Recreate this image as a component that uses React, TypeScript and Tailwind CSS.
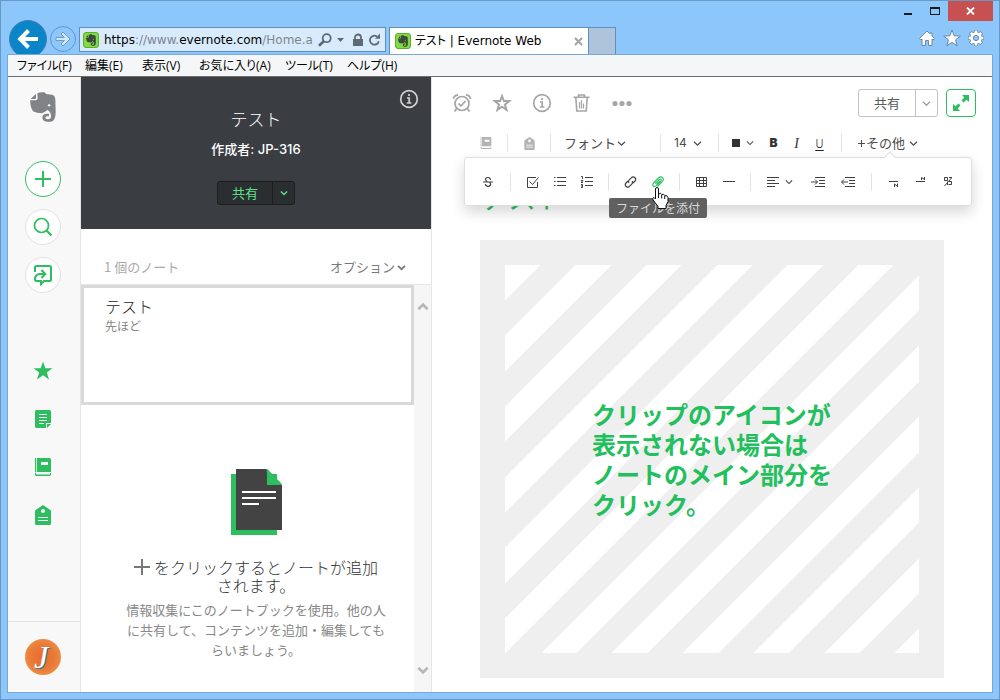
import React from "react";

type Kids = { children?: React.ReactNode };

function Chevron({ className = "", size = 9, width = 1.4 }: { className?: string; size?: number; width?: number }) {
  return (
    <svg className={className} width={size} height={size} viewBox="0 0 9 9" fill="none" stroke="currentColor" strokeWidth={width} aria-hidden="true">
      <path d="M1 2.8 4.5 6.2 8 2.8" />
    </svg>
  );
}

function Elephant({ width, height }: { width: number; height: number }) {
  return (
    <svg width={width} height={height} viewBox="0 0 78 90" fill="currentColor" aria-hidden="true">
      <path
        fillRule="evenodd"
        d="M22 4Q30-1 44 1L48 6 66 8Q75 10 76 22L77 60Q77 88 62 89H50Q37 88 37 76Q38 65 50 65H57V73H51Q46 74 46 78Q47 82 54 82Q64 82 63 70Q61 58 52 54Q46 60 36 64Q20 64 9 58Q-1 42 1 25H18Q23 24 23 19ZM53 43H62Q61 36 57 36 53 37 53 43Z"
      />
      <path d="M18 5 2 21H15Q18 21 18 18Z" />
    </svg>
  );
}

function EvernoteBadge() {
  return (
    <span className="flex size-4 shrink-0 items-center justify-center rounded-[3px] border border-[#5fae2c] bg-[#7ddb45] text-[#3d4a38]">
      <Elephant width={10} height={12} />
    </span>
  );
}

function WindowHeader() {
  return (
    <header className="flex h-[53px] items-start overflow-hidden">
      <button aria-label="戻る" className="mt-[19px] ml-0.5 flex size-[38px] shrink-0 items-center justify-center rounded-full border border-[#4a7ba8] bg-[#0a86c8] text-white">
        <svg width="22" height="22" viewBox="0 0 22 22" fill="none" stroke="currentColor" strokeWidth="4">
          <path d="M3 11H21M11.5 2.5 3.2 11 11.5 19.5" />
        </svg>
      </button>
      <button aria-label="進む" className="mt-[25px] ml-[3px] flex size-[26px] shrink-0 items-center justify-center rounded-full border border-[#5f97c9]">
        <svg width="16" height="16" viewBox="0 0 16 16">
          <path d="M1 6.5H9.500L6 3 8 1 15 8 8 15 6 13 9.500 9.500H1Z" fill="#d3e9fd" stroke="#6a9dca" strokeWidth="1" />
        </svg>
      </button>
      <div className="mt-[26px] ml-[3px] flex h-[25px] w-[307px] shrink-0 items-center border border-[#5f8fbd] bg-[#d8ebfc] pl-[3px]">
        <EvernoteBadge />
        <div role="textbox" aria-label="アドレス" className="ml-[5px] w-[210px] overflow-hidden font-['DejaVu_Sans',sans-serif] text-[12px] leading-5 whitespace-nowrap text-[#7d8790]">
          <span className="text-black">https</span>://www.<span className="text-black">evernote.com</span>/Home.a
        </div>
        <div className="ml-1 flex items-center text-[#5e6b76]">
          <button aria-label="検索" className="w-[15px]">
            <svg width="14" height="14" viewBox="0 0 14 14" fill="none" stroke="currentColor" strokeWidth="1.8">
              <circle cx="8.700" cy="5.200" r="4" />
              <path d="M6 8 1 12.800" strokeWidth="2.600" />
            </svg>
          </button>
          <button aria-label="履歴" className="ml-1 w-[11px]">
            <svg width="7" height="4" viewBox="0 0 7 4"><path d="M0 0H7L3.500 4Z" fill="currentColor" /></svg>
          </button>
          <svg className="ml-1" width="12" height="14" viewBox="0 0 12 14" aria-hidden="true">
            <path d="M1 6H11V13H1Z" fill="currentColor" />
            <path d="M3 6V4.500a3 3 0 0 1 6 0V6" fill="none" stroke="currentColor" strokeWidth="1.800" />
          </svg>
          <button aria-label="更新" className="ml-1">
            <svg width="13" height="14" viewBox="0 0 13 14" fill="none" stroke="currentColor" strokeWidth="1.800">
              <path d="M10.800 8.200A4.500 4.500 0 1 1 9 3.500" />
              <path d="M7 5.700H12V.5Z" fill="currentColor" stroke="none" />
            </svg>
          </button>
        </div>
      </div>
      <div className="mt-[26px] ml-[3px] flex h-[27px] w-[200px] shrink-0 items-center border border-b-0 border-[#5f8fbd] bg-white pl-[5px]">
        <EvernoteBadge />
        <span className="ml-1 flex-1 font-['DejaVu_Sans','Noto_Sans_CJK_JP',sans-serif] text-[12px] leading-5 whitespace-nowrap text-black [font-feature-settings:'palt']">
          テスト | Evernote Web
        </span>
        <button aria-label="タブを閉じる" className="mr-[5px]">
          <svg width="9" height="9" viewBox="0 0 9 9" stroke="#a3a3a3" strokeWidth="2"><path d="M1 1 8 8M8 1 1 8" /></svg>
        </button>
      </div>
      <button aria-label="新しいタブ" className="mt-[26px] h-[27px] w-[27px] shrink-0 border border-b-0 border-l-0 border-[#5f8fbd] bg-[#adc4da]" />
      <div className="ml-auto flex flex-col items-end">
        <div className="flex">
          <button aria-label="最小化" className="flex h-5 w-[27px] items-center justify-center">
            <svg width="8" height="8" viewBox="0 0 8 8"><path d="M0 6H8V8H0Z" fill="#1c1c1c" /></svg>
          </button>
          <button aria-label="最大化" className="flex h-5 w-[27px] items-center justify-center">
            <svg width="10" height="8" viewBox="0 0 10 8"><path d="M0 0H10V8H0ZM1 2V7H9V2Z" fill="#1c1c1c" fillRule="evenodd" /></svg>
          </button>
          <button aria-label="閉じる" className="flex h-5 w-[45px] items-center justify-center bg-[#c75050]">
            <svg width="9" height="8" viewBox="0 0 9 8" stroke="#fff" strokeWidth="1.800"><path d="M1 .5 8 7.500M8 .5 1 7.500" /></svg>
          </button>
        </div>
        <div className="mt-2 mr-2 flex gap-1.5">
          <button aria-label="ホーム">
            <svg width="18" height="18" viewBox="0 0 18 18" fill="#fff" stroke="#6b89a5" strokeWidth="1">
              <path d="M8 2 .5 9.500 2 11 3 10V16.500H6.500V11.500H9.500V16.500H13V10L14 11 15.500 9.500 13 7V4H11V5Z" />
            </svg>
          </button>
          <button aria-label="お気に入り">
            <svg width="18" height="18" viewBox="0 0 18 18" fill="#fff" stroke="#6b89a5" strokeWidth="1">
              <path d="M9 1 11.200 6.800 17.300 7.100 12.500 10.900 14.200 16.800 9 13.400 3.800 16.800 5.500 10.900 .7 7.100 6.800 6.800Z" />
            </svg>
          </button>
          <button aria-label="設定">
            <svg width="18" height="18" viewBox="0 0 18 18" aria-hidden="true">
              <g stroke="#6b89a5" strokeWidth="4"><path d="M9 1V17M1 9H17M3.300 3.300 14.700 14.700M14.700 3.300 3.300 14.700" /></g>
              <circle cx="9" cy="9" r="6.400" fill="#6b89a5" />
              <g stroke="#fff" strokeWidth="2.600"><path d="M9 1.600V16.400M1.600 9H16.400M3.800 3.800 14.200 14.200M14.200 3.800 3.800 14.200" /></g>
              <circle cx="9" cy="9" r="5.700" fill="#fff" />
              <circle cx="9" cy="9" r="2.600" fill="#8dc6fb" stroke="#6b89a5" strokeWidth="1" />
            </svg>
          </button>
        </div>
      </div>
    </header>
  );
}

function MenuBar() {
  return (
    <nav className="flex h-[22px] items-center border-b border-[#6d6d6d] bg-[#f5f6f7] pl-[9px] font-['Open_Sans','Noto_Sans_CJK_JP',sans-serif] text-[12px] leading-5 whitespace-nowrap text-black [font-feature-settings:'palt']">
      <button className="w-[68px] text-left">ファイル(F)</button>
      <button className="w-[57px] text-left">編集(E)</button>
      <button className="w-[57px] text-left">表示(V)</button>
      <button className="w-[86px] text-left">お気に入り(A)</button>
      <button className="w-[62px] text-left">ツール(T)</button>
      <button className="text-left">ヘルプ(H)</button>
    </nav>
  );
}

function NotebookGlyph({ size }: { size: number }) {
  return (
    <svg width={size} height={size} viewBox="0 0 18 18" fill="currentColor" aria-hidden="true">
      <path d="M1 0H2.200V14H1Z" />
      <path fillRule="evenodd" d="M3 0H15.500A1.500 1.500 0 0 1 17 1.500V14H3ZM7 4V7H14V4Z" />
      <path d="M1 14.200 2 15V15.500A1 1 0 0 0 3 16.500H16V15H17V16.500A1.500 1.500 0 0 1 15.500 18H2.500A1.500 1.500 0 0 1 1 16.500Z" />
    </svg>
  );
}

function TagGlyph({ size }: { size: number }) {
  return (
    <svg width={size} height={size} viewBox="0 0 20 20" fill="currentColor" aria-hidden="true">
      <path fillRule="evenodd" d="M10 0 17 4.700Q18 5.400 18 6.500V18.500A1.500 1.500 0 0 1 16.500 20H3.500A1.500 1.500 0 0 1 2 18.500V6.500Q2 5.400 3 4.700ZM10 4A2 2 0 1 0 10 8A2 2 0 1 0 10 4ZM5 12V13H15V12ZM5 15V16H15V15Z" />
    </svg>
  );
}

function SideItem({ label, round, border = "", children }: Kids & { label: string; round?: boolean; border?: string }) {
  return (
    <button aria-label={label} className={`flex size-9 items-center justify-center text-[#2dbe60] ${round ? "rounded-full border bg-white" : ""} ${border}`}>
      {children}
    </button>
  );
}

function Sidebar() {
  return (
    <aside className="flex w-[73px] shrink-0 flex-col border-r border-[#e6e6e6] bg-[#f8f8f8]">
      <div className="flex flex-1 flex-col items-center gap-3 pt-[15px] pr-0.5">
        <a href="#home" aria-label="Evernote" className="mb-[26px] text-[#828387]">
          <span className="flex h-[31px] items-start"><Elephant width={26} height={30} /></span>
        </a>
        <SideItem label="新規ノート" round border="border-[#2dbe60]">
          <svg width="16" height="16" viewBox="0 0 16 16" stroke="currentColor" strokeWidth="2"><path d="M8 0V16M0 8H16" /></svg>
        </SideItem>
        <SideItem label="検索" round border="border-[#e2e2e2]">
          <svg width="20" height="20" viewBox="0 0 20 20" fill="none" stroke="currentColor" strokeWidth="1.700">
            <circle cx="8.500" cy="8.500" r="7" /><path d="M13.500 13.500 18.500 18.500" strokeWidth="2.200" />
          </svg>
        </SideItem>
        <SideItem label="ワークチャット" round border="border-[#e2e2e2]">
          <svg width="20" height="22" viewBox="0 0 20 22" fill="none" stroke="currentColor" strokeWidth="2">
            <path d="M2 8V3.500A1.500 1.500 0 0 1 3.500 2H16.500A1.500 1.500 0 0 1 18 3.500V15.500A1.500 1.500 0 0 1 16.500 17H11L8 20V17H3.500A1.500 1.500 0 0 1 2 15.500C2 11.500 4 10 7 10H12M8.500 6 12.300 10 8.500 14" />
          </svg>
        </SideItem>
        <div className="mt-12 flex flex-col gap-3">
          <SideItem label="ショートカット">
            <svg width="20" height="20" viewBox="0 0 20 20"><path d="M10 .5 12.300 7.300H19.500L13.800 11.500 16 18.500 10 14.300 4 18.500 6.200 11.500 .5 7.300H7.700Z" fill="currentColor" /></svg>
          </SideItem>
          <SideItem label="ノート">
            <svg width="16" height="18" viewBox="0 0 16 18" fill="currentColor">
              <path fillRule="evenodd" d="M1.500 0H14.500A1.500 1.500 0 0 1 16 1.500V13H11V18H1.500A1.500 1.500 0 0 1 0 16.500V1.500A1.500 1.500 0 0 1 1.500 0ZM4 4V5H12V4ZM4 7V8H12V7ZM4 10V11H12V10ZM4 13V14H9V13Z" />
              <path d="M12 14H16L12 18Z" />
            </svg>
          </SideItem>
          <SideItem label="ノートブック"><NotebookGlyph size={18} /></SideItem>
          <SideItem label="タグ"><TagGlyph size={20} /></SideItem>
        </div>
      </div>
      <div className="flex h-[71px] items-center justify-center border-t border-[#e2e2e2] pr-0.5">
        <button
          aria-label="アカウント"
          className="flex size-9 items-center justify-center rounded-full bg-[radial-gradient(circle,#e8692f_0%,#ea7b38_50%,#efa351_100%)] pr-1 font-['Liberation_Serif',serif] text-[32px] leading-9 text-white italic [text-shadow:1px_1px_0_#2a7fa8]"
        >
          J
        </button>
      </div>
    </aside>
  );
}

function InfoCircle({ size }: { size: number }) {
  return (
    <svg width={size} height={size} viewBox="0 0 20 20" fill="none" stroke="currentColor" aria-hidden="true">
      <circle cx="10" cy="10" r="8.300" strokeWidth="1.700" />
      <path d="M10 5V7M8 9H10.200V13.700M7.800 14H12.400" strokeWidth="1.700" />
    </svg>
  );
}

function NoteList() {
  return (
    <section className="flex w-[351px] shrink-0 flex-col border-r border-[#e6e6e6] bg-white">
      <div className="relative flex h-[152px] flex-col items-center bg-[#3a3d42] pt-[30px]">
        <button aria-label="ノートブック情報" className="absolute top-3 right-3 text-[#d0d1d2]"><InfoCircle size={20} /></button>
        <h1 className="text-[17px] leading-6 font-light text-white">テスト</h1>
        <p className="mt-2 font-['Inter','Noto_Sans_CJK_JP',sans-serif] text-[13px] leading-5 font-medium text-white">作成者: JP-316</p>
        <div className="mt-[22px] flex h-6 overflow-hidden rounded-[3px] border border-[#1b1d1f] bg-[#2b2e31] text-[#5fe08a]">
          <button className="w-[54px] text-[13px] leading-5">共有</button>
          <button aria-label="共有メニュー" className="flex w-[22px] items-center justify-center border-l border-[#1b1d1f]"><Chevron size={8} width={1.6} /></button>
        </div>
      </div>
      <div className="flex h-14 items-end justify-between border-b border-[#e6e6e6] pr-[25px] pb-[7px] pl-[23px] text-[13px] leading-5">
        <span className="text-[#aaaaaa]">1 個のノート</span>
        <button className="flex items-center gap-0.5 text-[#7a7a7a]">オプション<Chevron width={1.800} /></button>
      </div>
      <div className="flex flex-1">
        <div className="flex flex-1 flex-col">
          <article className="h-[120px] border-3 border-[#d9d9d9] px-[21px] pt-1.5">
            <h2 className="text-[16px] leading-6 font-light text-[#222222]">テスト</h2>
            <p className="text-[12px] leading-4 text-[#888888]">先ほど</p>
          </article>
          <div className="flex flex-col items-center pt-16 pl-[17px]">
            <svg width="51" height="66" viewBox="0 0 51 66" aria-hidden="true">
              <path d="M0 5H46V66H0Z" fill="#2dbe60" />
              <path d="M5 0H36L51 16V61H5Z" fill="#434343" />
              <path d="M33 0Q36 0 38 2L49 13Q51 15 51 17V16H36V4Q36 0 33 0Z" fill="#2dbe60" />
              <path d="M11 22H45V24H11ZM11 28H45V30H11ZM11 34H28V36H11Z" fill="#fff" />
            </svg>
            <p className="mt-[23px] w-[260px] text-center text-[16px] leading-[18px] font-light text-[#333333]">
              <svg className="mr-1 inline-block align-[-1px]" width="16" height="16" viewBox="0 0 16 16" stroke="#777" strokeWidth="2" aria-label="+"><path d="M8 0V16M0 8H16" /></svg>
              をクリックするとノートが追加<br />されます。
            </p>
            <p className="mt-1.5 w-[260px] text-center text-[13px] leading-5 text-[#888888]">
              情報収集にこのノートブックを使用。他の人に共有して、コンテンツを追加・編集してもらいましょう。
            </p>
          </div>
        </div>
        <div className="flex w-[17px] flex-col items-center justify-between bg-[#f6f6f6] pt-4 pb-4 text-[#b8b8b8]">
          <button aria-label="上へスクロール" className="rotate-180"><Chevron size={12} width={2} /></button>
          <button aria-label="下へスクロール"><Chevron size={12} width={2} /></button>
        </div>
      </div>
    </section>
  );
}

function Divider({ className = "" }: { className?: string }) {
  return <span className={`h-[18px] w-px shrink-0 bg-[#e3e3e3] ${className}`} />;
}

function Tool({ label, className, children }: Kids & { label: string; className: string }) {
  return (
    <button aria-label={label} className={`flex h-6 shrink-0 items-center justify-center ${className}`}>
      {children}
    </button>
  );
}

function Lines({ d, w = 14, h = 12, className = "" }: { d: string; w?: number; h?: number; className?: string }) {
  return (
    <svg className={className} width={w} height={h} viewBox={`0 0 ${w} ${h}`} fill="none" stroke="currentColor" strokeWidth="1" aria-hidden="true">
      <path d={d} />
    </svg>
  );
}

function MoreTools() {
  return (
    <div className="absolute top-[80px] right-5 left-8 z-10 flex h-[49px] items-center rounded-[3px] border border-[#dedede] bg-white text-[#404040] shadow-[0_6px_14px_rgba(0,0,0,0.16)]">
      <span className="absolute -top-[5px] right-[77px] size-2 rotate-45 border-t border-l border-[#dedede] bg-white" />
      <Tool label="取り消し線" className="w-[45px]">
        <svg width="10" height="12" viewBox="0 0 10 12" fill="none" stroke="currentColor" strokeWidth="1.200" aria-hidden="true">
          <path d="M0 6H10M7.500 3.800Q7.300 1.500 5 1.500 2.500 1.500 2.500 3.300 2.500 4.800 4.200 5.300M6.500 6.500Q7.600 7.200 7.600 8.300 7.600 10.300 5 10.300 2.600 10.300 2.300 8" />
        </svg>
      </Tool>
      <Divider className="mr-2" />
      <Tool label="チェックボックス" className="w-[27px]"><Lines w={13} h={12} d="M11.500 6V11.500H1.500V1.500H10M3.500 5.500 6.500 8.500 12.500 1.500" /></Tool>
      <Tool label="箇条書き" className="w-[27px]"><Lines w={12} d="M3 1.500H12M3 5.500H12M3 9.500H12M0 1.500H1.500M0 5.500H1.500M0 9.500H1.500" /></Tool>
      <Tool label="番号付きリスト" className="w-[27px]"><Lines w={12} d="M4 1.500H12M4 5.500H12M4 9.500H12M0 .5H1.500V3M0 4.500H2L0 6.500H2M0 8.500H1.500V11.500H0M0 10H1.500" /></Tool>
      <Divider className="mx-2" />
      <Tool label="リンク" className="w-[27px]">
        <svg width="13" height="12" viewBox="0 0 13 12" fill="none" stroke="currentColor" strokeWidth="1.200">
          <path d="M5 6.800C4 5.500 4.500 4.600 5.500 3.600L7.300 1.800A2.300 2.300 0 0 1 11 5L9 7M8 5.200C9 6.500 8.500 7.400 7.500 8.400L5.700 10.200A2.300 2.300 0 0 1 2 7L4 5" />
        </svg>
      </Tool>
      <div className="relative">
        <Tool label="ファイルを添付" className="w-[27px] text-[#2dbe60]">
          <svg width="12" height="12" viewBox="0 0 12 12" fill="none" stroke="currentColor" strokeWidth="1.100">
            <path d="M3.300 7.500 7 3.800C8.500 2.300 10 3.800 8.600 5.300L4.300 9.600C2 11.800-.5 9.300 1.500 7L6.500 2C9.500-.8 13 2.600 10.200 5.600L5.500 10.500M4.500 8.500 8 5" />
          </svg>
        </Tool>
        <span role="tooltip" className="absolute top-7 -left-[35px] h-5 w-[98px] rounded-[2px] bg-[#606060] text-center text-[12px] leading-5 whitespace-nowrap text-[#d8d8d8]">
          ファイルを添付
        </span>
        <svg className="absolute top-[17px] left-2" width="17" height="22" viewBox="0 0 17 22" aria-hidden="true">
          <path d="M5 .5Q6.500 .5 6.500 2V7Q9 5.500 9.700 7.500 12 6.500 12.700 8.500 15.500 8 16 10.500V14.500L14 18.500V21.500H6V19.500L1 13Q0 11 2 10.500L3.500 12V2Q3.500 .5 5 .5Z" fill="#fff" stroke="#111" />
          <path d="M6.500 7V11M9.700 8V11.500M12.700 9V12" stroke="#111" />
        </svg>
      </div>
      <Divider className="mr-2 ml-2" />
      <Tool label="表" className="w-[27px]"><Lines w={11} h={12} d="M.5 1.500H10.500V10.500H.5ZM.5 4.500H10.500M.5 7.500H10.500M3.500 1.500V10.500M7.500 1.500V10.500" /></Tool>
      <Tool label="水平線" className="w-[27px]"><Lines w={12} h={12} d="M0 5.500H12" /></Tool>
      <Divider className="mr-2 ml-2" />
      <Tool label="配置" className="w-[42px] gap-1.5"><Lines w={12} h={12} d="M0 1.500H12M0 4.500H8M0 7.500H12M0 10.500H8" /><Chevron size={8} width={1.2} /></Tool>
      <Tool label="インデント" className="ml-0.5 w-[30px]"><Lines d="M4 1.500H14M8 4.500H14M8 7.500H14M4 10.500H14M0 6H6.500M4 3.500 6.500 6 4 8.500" /></Tool>
      <Tool label="インデント解除" className="w-[30px]"><Lines d="M4 1.500H14M8 4.500H14M8 7.500H14M4 10.500H14M.5 6H7M3 3.500.5 6 3 8.500" /></Tool>
      <Divider className="mr-2 ml-2" />
      <Tool label="下付き" className="w-[27px]"><Lines w={10} d="M0 5.500H9M5.500 11V8M5.500 8 8.500 10.500M8.500 11V7.500" /></Tool>
      <Tool label="上付き" className="w-[27px]"><Lines w={10} d="M0 5.500H9M5.500 4V1.500M5.500 1.500 8.500 3.500M8.500 4V1" /></Tool>
      <Tool label="書式を解除" className="w-[27px]"><Lines w={10} d="M1.500 2.500V4.500H4.500V1.500H1.500V3M6 1.500H9M8.500 2 1.500 10M4.500 5.500V9M6 5.500H8.500V8.500H5.500" /></Tool>
    </div>
  );
}

function Toolbar() {
  return (
    <div className="flex h-[52px] items-center pl-[33px] text-[13px] text-[#4c4c4c]">
      <Tool label="ノートブックを選択" className="w-[42px] text-[#b4b4b4]"><NotebookGlyph size={12} /></Tool>
      <Divider />
      <Tool label="タグを追加" className="w-[42px] text-[#b4b4b4]"><TagGlyph size={13} /></Tool>
      <Divider />
      <label className="flex w-[109px] items-center pl-[13px]">
        <select aria-label="フォント" className="w-[53px] appearance-none bg-transparent leading-5 outline-none"><option>フォント</option></select>
        <Chevron width={1.2} />
      </label>
      <Divider />
      <label className="flex w-[57px] items-center pl-[13px]">
        <select aria-label="文字サイズ" className="w-[19px] appearance-none bg-transparent font-['Inter',sans-serif] text-[12px] leading-5 outline-none"><option>14</option></select>
        <Chevron width={1.2} />
      </label>
      <Divider />
      <Tool label="文字の色" className="w-[43px] gap-1.5 pl-1"><span className="size-2 bg-[#333333]" /><Chevron size={8} width={1.2} /></Tool>
      <Tool label="太字" className="w-[23px] font-['Inter',sans-serif] text-[12px] font-black text-[#333333]">B</Tool>
      <Tool label="斜体" className="w-[23px] font-['Liberation_Serif',serif] text-[14px] text-[#333333] italic">I</Tool>
      <Tool label="下線" className="w-[23px] font-light text-[12px] text-[#222222] underline underline-offset-2">U</Tool>
      <Divider className="ml-2.5" />
      <button className="flex items-center gap-1 pl-[15px] leading-5 whitespace-nowrap">
        <span className="flex items-center"><Lines w={9} h={9} d="M4.500 1V8M1 4.500H8" />その他</span>
        <Chevron width={1.2} />
      </button>
    </div>
  );
}

function Editor() {
  return (
    <main className="relative flex min-w-0 flex-1 flex-col bg-white">
      <div className="flex items-center pt-3 pr-4 pl-5">
        <div className="flex items-center gap-5 text-[#a6a6a6]">
          <button aria-label="リマインダー">
            <svg width="20" height="20" viewBox="0 0 20 20" fill="none" stroke="currentColor" strokeWidth="1.700">
              <circle cx="10" cy="10.500" r="7" />
              <path d="M6.500 10.500 9 13 13.500 8M4.700 15.500 2.500 18.500M15.300 15.500 17.500 18.500M1.500 6Q1.500 2.500 6 1.800M18.500 6Q18.500 2.500 14 1.800" />
            </svg>
          </button>
          <button aria-label="ショートカットに追加">
            <svg width="20" height="20" viewBox="0 0 20 20" fill="none" stroke="currentColor" strokeWidth="2">
              <path d="M10 3 11.900 8.100H17.200L13 11.500 14.500 16.800 10 13.700 5.500 16.800 7 11.500 2.800 8.100H8.100Z" />
            </svg>
          </button>
          <button aria-label="ノート情報"><InfoCircle size={20} /></button>
          <button aria-label="削除">
            <svg width="20" height="20" viewBox="0 0 20 20" fill="none" stroke="currentColor" strokeWidth="1.600">
              <path d="M1.500 4.200H17.500M6.500 4V2H12.500V4M3.800 4.500 4.800 18H14.200L15.200 4.500" />
              <path strokeWidth="1.200" d="M7.500 15.500V9M9.500 15.500V7M11.500 15.500V10.500" />
            </svg>
          </button>
          <button aria-label="その他の操作">
            <svg width="20" height="20" viewBox="0 0 20 20" fill="currentColor"><circle cx="3" cy="10.500" r="2.600" /><circle cx="10" cy="10.500" r="2.600" /><circle cx="17" cy="10.500" r="2.600" /></svg>
          </button>
        </div>
        <div className="ml-auto flex h-7 rounded-[3px] border border-[#c1c1c1] text-[#5a5a5a]">
          <button className="w-14 text-[13px] leading-5">共有</button>
          <button aria-label="共有オプション" className="flex w-[22px] items-center justify-center border-l border-[#c1c1c1] text-[#a0a0a0]"><Chevron /></button>
        </div>
        <button aria-label="全画面表示" className="ml-2 flex h-7 w-[30px] items-center justify-center rounded-[4px] border border-[#2dbe60] text-[#2dbe60]">
          <svg width="16" height="16" viewBox="0 0 16 16" fill="currentColor">
            <path d="M9 0H16V7L13.500 4.700 10.500 7.500 8.500 5.500 11.300 2.500ZM7 16H0V9L2.500 11.300 5.500 8.500 7.500 10.500 4.700 13.500Z" />
          </svg>
        </button>
      </div>
      <Toolbar />
      <MoreTools />
      <article className="flex flex-1 flex-col px-12 pt-3 pb-3.5">
        <h2 className="h-[59px] text-[28px] leading-8 text-[#2dbe60]">テスト</h2>
        <div className="flex min-h-[200px] flex-1 border-25 border-[#efefef] bg-[repeating-linear-gradient(135deg,#ffffff_0_25px,#efefef_25px_50px)] bg-origin-padding">
          <p className="m-auto w-60 text-[24px] leading-[30px] font-bold whitespace-nowrap text-[#22c05c]">
            クリップのアイコンが<br />表示されない場合は<br />ノートのメイン部分を<br />クリック。
          </p>
        </div>
      </article>
    </main>
  );
}

export default function App() {
  return (
    <div lang="ja" className="flex min-h-screen flex-col border border-[#6899c6] bg-[#8dc6fb] px-1.5 pb-1.5 font-['Noto_Sans_CJK_JP',sans-serif]">
      <WindowHeader />
      <div className="flex flex-1 flex-col border border-[#78a9d6]">
        <MenuBar />
        <div className="flex flex-1">
          <Sidebar />
          <NoteList />
          <Editor />
        </div>
      </div>
    </div>
  );
}
